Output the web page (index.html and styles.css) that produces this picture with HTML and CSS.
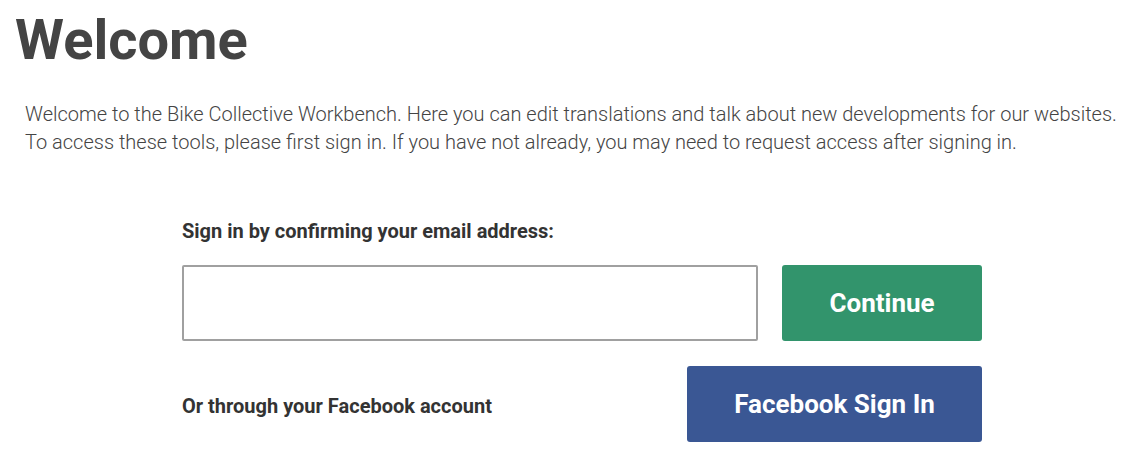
FILE: index.html
```html
<!DOCTYPE html>
<html lang="en">
<head>
<meta charset="utf-8">
<title>Welcome</title>
<link rel="stylesheet" href="styles.css">
</head>
<body>
<main class="page">
  <h1 class="title">Welcome</h1>
  <p class="intro">Welcome to the Bike Collective Workbench. Here you can edit translations and talk about new developments for our websites. To access these tools, please first sign in. If you have not already, you may need to request access after signing in.</p>
  <section class="signin">
    <label class="label" for="email">Sign in by confirming your email address:</label>
    <div class="row">
      <input class="email" id="email" type="email">
      <button class="btn btn-continue" type="button">Continue</button>
    </div>
    <div class="row row-fb">
      <span class="fb-label">Or through your Facebook account</span>
      <button class="btn btn-fb" type="button">Facebook Sign In</button>
    </div>
  </section>
</main>
</body>
</html>
```
FILE: styles.css
```css
html, body {
  margin: 0;
  padding: 0;
  background: #fff;
}
body {
  font-family: Roboto, "Liberation Sans", sans-serif;
  color: #444;
}
.page {
  padding: 0 0 0 15px;
}
.title {
  margin: 0;
  padding-top: 4px;
  font-size: 56px;
  line-height: 72px;
  font-weight: 700;
  color: #444;
}
.intro {
  margin: 24px 0 0 10px;
  width: 1100px;
  font-size: 20px;
  line-height: 28px;
  font-weight: 300;
  color: #444;
}
.signin {
  margin: 61px 0 0 167px;
  width: 800px;
}
.label {
  display: block;
  font-size: 20px;
  font-weight: 700;
  line-height: 28px;
  color: #333;
}
.row {
  display: flex;
  align-items: center;
  justify-content: space-between;
  margin-top: 20px;
}
.row-fb {
  margin-top: 25px;
}
.email {
  box-sizing: border-box;
  width: 576px;
  height: 76px;
  border: 2px solid #a0a0a0;
  border-radius: 2px;
  background: #fff;
  margin: 0;
  padding: 0 12px;
}
.btn {
  box-sizing: border-box;
  height: 76px;
  border: none;
  border-radius: 3px;
  color: #fff;
  font-family: Roboto, "Liberation Sans", sans-serif;
  font-weight: 700;
  font-size: 26px;
  margin: 0;
}
.btn-continue {
  width: 200px;
  background: #32946c;
}
.btn-fb {
  width: 295px;
  background: #3a5794;
}
.fb-label {
  font-size: 20px;
  font-weight: 700;
  color: #333;
  padding-top: 3px;
}
```
